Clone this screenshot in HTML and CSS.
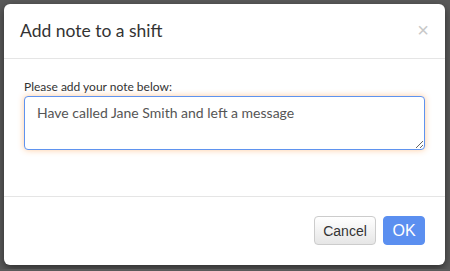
FILE: index.html
```html
<!DOCTYPE html>
<html lang="en">
<head>
    <meta charset="UTF-8" />
    <title>Add note to a shift</title>
    <link rel="stylesheet" href="styles.css">
</head>
<body>
    <div class="modal">
        <div class="modal-header">
            <h4 class="modal-title">Add note to a shift</h4>
            <span class="close">&times;</span>
        </div>

        <div class="modal-body">
            <label for="note">Please add your note below:</label>
            <textarea id="note">Have called Jane Smith and left a message</textarea>
        </div>

        <div class="modal-footer">
            <button class="btn btn-default">Cancel</button>
            <button class="btn btn-primary">OK</button>
        </div>
    </div>
</body>
</html>
```

FILE: styles.css
```css
body {
    margin: 0;
    padding: 4px;
    background-color: #5a5a5a;
    font-family: Lato, "Open Sans", sans-serif;
    color: #333;
}

.modal {
    width: 441px;
    height: 261px;
    box-sizing: border-box;
    background-color: #fff;
    border-radius: 6px;
    box-shadow: 0 3px 9px rgba(0, 0, 0, 0.5);
    display: flex;
    flex-direction: column;
}

.modal-header {
    display: flex;
    align-items: center;
    justify-content: space-between;
    padding: 17px 16px 17px 16px;
    border-bottom: 1px solid #e5e5e5;
}

.modal-title {
    margin: 0;
    font-size: 17.5px;
    font-weight: normal;
    line-height: 20px;
    color: #333;
}

.close {
    font-family: "Liberation Sans", Arial, sans-serif;
    font-size: 20px;
    line-height: 20px;
    color: #c8c8c8;
    margin-top: -2px;
}

.modal-body {
    padding: 21px 20px 0 20px;
    flex: 1;
}

.modal-body label {
    display: block;
    font-size: 12px;
    line-height: 14px;
    margin-bottom: 2px;
    color: #333;
}

textarea {
    display: block;
    width: 401px;
    height: 54px;
    box-sizing: border-box;
    padding: 6px 12px;
    font-family: Lato, sans-serif;
    font-size: 14px;
    line-height: 20px;
    color: #555;
    border: 1px solid #5f93ef;
    border-radius: 4px;
    box-shadow: 0 0 6px rgba(255, 140, 40, 0.45);
    outline: none;
    resize: both;
}

.modal-footer {
    display: flex;
    justify-content: flex-end;
    gap: 7px;
    padding: 19px 20px 20px 20px;
    border-top: 1px solid #e5e5e5;
}

.btn {
    height: 29px;
    padding: 0 8px;
    font-family: "Liberation Sans", Arial, sans-serif;
    font-size: 14px;
    border-radius: 4px;
    cursor: pointer;
}

.btn-default {
    width: 62px;
    color: #333;
    background: linear-gradient(#fff, #e6e6e6);
    border: 1px solid #ccc;
}

.btn-primary {
    width: 42px;
    color: #fff;
    font-size: 16px;
    background-color: #5b8ff0;
    border: 1px solid #5b8ff0;
}
```
